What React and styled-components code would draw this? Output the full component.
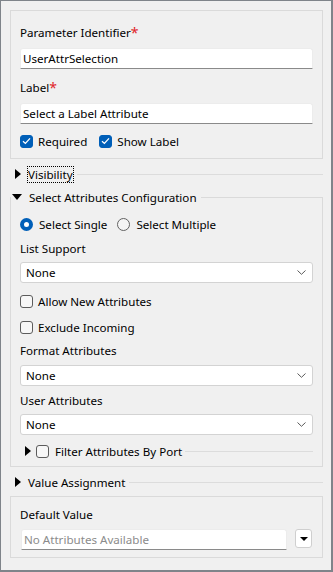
import React from 'react';
import styled, { createGlobalStyle } from 'styled-components';

const GlobalStyle = createGlobalStyle`
  body {
    margin: 0;
    background: #f0f0f0;
  }
`;

const Window = styled.div`
  width: 333px;
  height: 572px;
  box-sizing: border-box;
  border: solid #7f848a;
  border-width: 1px 2px 2px 1px;
  background: #f0f0f0;
  padding: 9px 8px 0 9px;
  display: flex;
  flex-direction: column;
  font-family: "Noto Sans", sans-serif;
  font-size: 11.6px;
  color: #000;
`;

const GroupBox = styled.div`
  border: 1px solid #dadada;
  padding: ${p => p.$pad};
  margin-top: ${p => p.$mt || 0}px;
  display: flex;
  flex-direction: column;
`;

const FieldSet = styled.fieldset`
  border: 1px solid #dadada;
  margin: 5px 0 0 0;
  padding: 0 9px 6px 9px;
  min-inline-size: 0;
  display: flex;
  flex-direction: column;
`;

const Legend = styled.legend`
  padding: 0 3px 0 0;
  margin-left: -9px;
  height: 18px;
  display: flex;
  align-items: center;
`;

const Label = styled.div`
  line-height: 16px;
  height: 16px;
  margin-top: ${p => p.$mt || 0}px;
  white-space: nowrap;
`;

const Req = styled.span`
  color: #e0262b;
  font-size: 14px;
  line-height: 0;
  vertical-align: -1px;
`;

const TextInput = styled.div`
  height: 21px;
  box-sizing: border-box;
  margin-top: ${p => p.$mt || 0}px;
  width: ${p => p.$w || 'auto'};
  background: #fff;
  border: 1px solid #ececec;
  border-bottom-color: #8a8a8a;
  border-radius: 3px 3px 0 0;
  padding: 0 2px;
  display: flex;
  align-items: center;
  color: ${p => (p.$placeholder ? '#8b8b8b' : '#000')};
  white-space: nowrap;
`;

const Select = styled.div`
  height: 21px;
  box-sizing: border-box;
  margin-top: ${p => p.$mt || 0}px;
  background: #fff;
  border: 1px solid #d3d3d3;
  border-radius: 3px;
  padding: 0 6px 0 5px;
  display: flex;
  align-items: center;
  justify-content: space-between;
`;

const Row = styled.div`
  display: flex;
  align-items: center;
  height: 16px;
  margin-top: ${p => p.$mt || 0}px;
  gap: ${p => p.$gap || 0}px;
`;

const Option = styled.label`
  display: flex;
  align-items: center;
  gap: ${p => p.$gap || 5}px;
  white-space: nowrap;
`;

const Box = styled.span`
  width: 13px;
  height: 13px;
  box-sizing: border-box;
  border-radius: 3px;
  background: ${p => (p.$on ? '#005fb8' : '#f7f7f7')};
  border: 1px solid ${p => (p.$on ? '#005fb8' : '#5c5c5c')};
  display: flex;
  align-items: center;
  justify-content: center;
  flex: none;
`;

const Radio = styled.span`
  width: 13px;
  height: 13px;
  box-sizing: border-box;
  border-radius: 50%;
  flex: none;
  background: ${p => (p.$on ? '#fff' : '#f5f5f5')};
  border: ${p => (p.$on ? '4px solid #005fb8' : '1px solid #626262')};
`;

const Header = styled.div`
  display: flex;
  align-items: center;
  height: 18px;
  margin-top: ${p => p.$mt || 0}px;
`;

const ArrowCell = styled.span`
  width: ${p => p.$w}px;
  padding-left: ${p => p.$pl}px;
  box-sizing: border-box;
  display: flex;
  align-items: center;
  flex: none;
`;

const RightTri = styled.span`
  width: 0;
  height: 0;
  border-top: 5px solid transparent;
  border-bottom: 5px solid transparent;
  border-left: 6px solid #000;
`;

const DownTri = styled.span`
  width: 0;
  height: 0;
  border-left: 5px solid transparent;
  border-right: 5px solid transparent;
  border-top: 6px solid #000;
`;

const Title = styled.span`
  border: 1px dotted ${p => (p.$focus ? '#000' : 'transparent')};
  height: 17px;
  box-sizing: border-box;
  line-height: 15px;
  white-space: nowrap;
`;

const Rule = styled.span`
  flex: 1;
  height: 1px;
  background: #dcdcdc;
  margin-left: 3px;
`;

const DropButton = styled.div`
  width: 17px;
  height: 19px;
  box-sizing: border-box;
  background: #fff;
  border: 1px solid #cfcfcf;
  border-radius: 3px;
  display: flex;
  align-items: center;
  justify-content: center;
  flex: none;
`;

const SmallDown = styled.span`
  width: 0;
  height: 0;
  border-left: 4px solid transparent;
  border-right: 4px solid transparent;
  border-top: 4px solid #000;
`;

const InputRow = styled.div`
  display: flex;
  align-items: flex-start;
  justify-content: space-between;
  margin-top: 6px;
  padding-left: 1px;
`;

const Check = () => (
  <svg width="9" height="8" viewBox="0 0 9 8">
    <path d="M1 4.2 L3.4 6.4 L8 1.4" fill="none" stroke="#fff" strokeWidth="1.3" />
  </svg>
);

const Chevron = () => (
  <svg width="9" height="5" viewBox="0 0 9 5">
    <path d="M0.5 0.5 L4.5 4.3 L8.5 0.5" fill="none" stroke="#5a5a5a" strokeWidth="1" />
  </svg>
);

function CheckOption({ on, children }) {
  return (
    <Option>
      <Box $on={on}>{on && <Check />}</Box>
      {children}
    </Option>
  );
}

function DropDown({ mt, value }) {
  return (
    <Select $mt={mt}>
      <span>{value}</span>
      <Chevron />
    </Select>
  );
}

export default function App() {
  return (
    <>
      <GlobalStyle />
      <Window>
        <GroupBox $pad="14px 9px 9px 9px">
          <Label>Parameter Identifier<Req>*</Req></Label>
          <TextInput $mt={7}>UserAttrSelection</TextInput>
          <Label $mt={11}>Label<Req>*</Req></Label>
          <TextInput $mt={7}>Select a Label Attribute</TextInput>
          <Row $mt={9} $gap={12}>
            <CheckOption on>Required</CheckOption>
            <CheckOption on>Show Label</CheckOption>
          </Row>
        </GroupBox>

        <Header $mt={6}>
          <ArrowCell $w={17} $pl={5}><RightTri /></ArrowCell>
          <Title $focus>Visibility</Title>
          <Rule />
        </Header>

        <FieldSet>
          <Legend>
            <ArrowCell $w={17} $pl={1}><DownTri /></ArrowCell>
            <Title>Select Attributes Configuration</Title>
          </Legend>
          <Row $mt={10} $gap={10}>
            <Option $gap={6}><Radio $on />Select Single</Option>
            <Option $gap={6}><Radio />Select Multiple</Option>
          </Row>
          <Label $mt={9}>List Support</Label>
          <DropDown mt={5} value="None" />
          <Row $mt={10}>
            <CheckOption>Allow New Attributes</CheckOption>
          </Row>
          <Row $mt={10}>
            <CheckOption>Exclude Incoming</CheckOption>
          </Row>
          <Label $mt={8}>Format Attributes</Label>
          <DropDown mt={6} value="None" />
          <Label $mt={7}>User Attributes</Label>
          <DropDown mt={5} value="None" />
          <Header $mt={7}>
            <ArrowCell $w={16} $pl={5}><RightTri /></ArrowCell>
            <Option $gap={6}>
              <Box />
              Filter Attributes By Port
            </Option>
            <Rule />
          </Header>
        </FieldSet>

        <Header $mt={6}>
          <ArrowCell $w={17} $pl={5}><RightTri /></ArrowCell>
          <Title>Value Assignment</Title>
          <Rule />
        </Header>

        <GroupBox $pad="10px 10px 7px 9px" $mt={5}>
          <Label>Default Value</Label>
          <InputRow>
            <TextInput $w="266px" $placeholder>No Attributes Available</TextInput>
            <DropButton><SmallDown /></DropButton>
          </InputRow>
        </GroupBox>
      </Window>
    </>
  );
}
